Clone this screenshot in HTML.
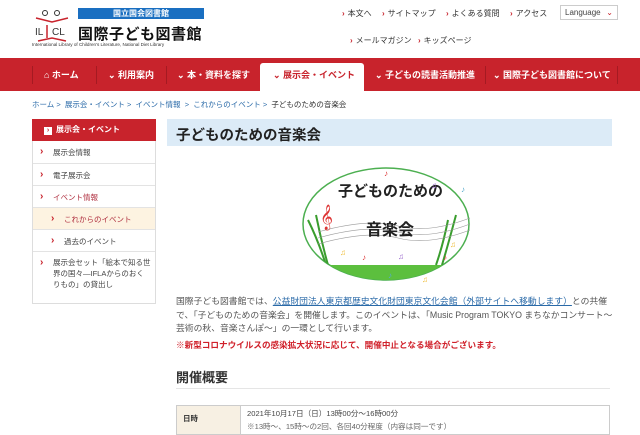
<!DOCTYPE html>
<html><head><meta charset="utf-8"><style>
*{margin:0;padding:0;box-sizing:border-box}
body{width:640px;height:426px;overflow:hidden;background:#fff;font-family:"Liberation Sans","Noto Sans CJK JP",sans-serif;color:#333;position:relative}
.a{position:absolute}
.t{font-size:8px;white-space:nowrap}
.chev{color:#c8232c;font-weight:bold;margin-right:3px}
.nav{left:0;top:58px;width:640px;height:33px;background:#c8232c}
.ni{top:68px;color:#fff;font-size:9px;font-weight:bold;white-space:nowrap}
.sep{top:66px;width:1px;height:18px;background:#a51a22}
.side{left:32px;width:124px;border:1px solid #ddd;border-top:none;font-size:7.5px;color:#444}
.si{position:absolute;left:0;width:122px;border-top:1px solid #e3e3e3;padding-left:20px}
.si:before{content:"›";position:absolute;left:7px;color:#c8232c;font-weight:bold;font-size:10px;line-height:10px;top:6px}
.si.sub:before{left:18px}
</style></head><body>
<svg class="a" style="left:32px;top:8px" width="40" height="36" viewBox="0 0 40 36">
<path d="M4 10 L20 14 L36 10" stroke="#c8232c" stroke-width="1.5" fill="none"/>
<path d="M6 33 L20 30 L34 33" stroke="#c8232c" stroke-width="1.5" fill="none"/>
<circle cx="13" cy="5" r="2.5" fill="none" stroke="#333"/><circle cx="25" cy="5" r="2.5" fill="none" stroke="#333"/>
<text x="3" y="27" font-size="10" fill="#333" font-family="Liberation Sans">IL</text>
<text x="20" y="27" font-size="10" fill="#333" font-family="Liberation Sans">CL</text>
<line x1="15" y1="17" x2="15" y2="30" stroke="#c8232c" stroke-width="1.5"/>
</svg>
<div class="a" style="left:78px;top:8px;width:126px;height:11px;background:#1a6fc1;color:#fff;font-size:8px;font-weight:bold;text-align:center;line-height:11px">国立国会図書館</div>
<div class="a" style="left:78px;top:23px;font-size:15px;font-weight:bold;color:#111;white-space:nowrap;letter-spacing:0.5px">国際子ども図書館</div>
<div class="a" style="left:32px;top:42px;font-size:4.6px;color:#333;white-space:nowrap">International Library of Children's Literature, National Diet Library</div>
<div class="a t" style="left:342px;top:8px"><span class="chev">›</span>本文へ</div>
<div class="a t" style="left:382px;top:8px"><span class="chev">›</span>サイトマップ</div>
<div class="a t" style="left:446px;top:8px"><span class="chev">›</span>よくある質問</div>
<div class="a t" style="left:510px;top:8px"><span class="chev">›</span>アクセス</div>
<div class="a" style="left:560px;top:5px;width:58px;height:15px;border:1px solid #ccc;font-size:8px;color:#444;padding:2px 4px">Language <span style="color:#c8232c;float:right">⌄</span></div>
<div class="a t" style="left:350px;top:35px"><span class="chev">›</span>メールマガジン</div>
<div class="a t" style="left:418px;top:35px"><span class="chev">›</span>キッズページ</div>
<div class="a nav"></div>
<div class="a" style="left:260px;top:63px;width:104px;height:28px;background:#fff;border-radius:3px 3px 0 0"></div>
<div class="a sep" style="left:32px"></div><div class="a sep" style="left:96px"></div><div class="a sep" style="left:166px"></div><div class="a sep" style="left:485px"></div><div class="a sep" style="left:617px"></div>
<div class="a ni" style="left:44px">⌂ ホーム</div>
<div class="a ni" style="left:108px">⌄ 利用案内</div>
<div class="a ni" style="left:177px">⌄ 本・資料を探す</div>
<div class="a ni" style="left:273px;color:#c8232c">⌄ 展示会・イベント</div>
<div class="a ni" style="left:375px">⌄ 子どもの読書活動推進</div>
<div class="a ni" style="left:493px">⌄ 国際子ども図書館について</div>
<div class="a" style="left:32px;top:99px;font-size:7.5px;color:#2a6aa8;white-space:nowrap">ホーム &gt;&nbsp; 展示会・イベント &gt;&nbsp; イベント情報 &nbsp;&gt;&nbsp; これからのイベント &gt;&nbsp; <span style="color:#333">子どものための音楽会</span></div>
<div class="a" style="left:32px;top:119px;width:124px;height:22px;background:#c8232c;color:#fff;font-size:8px;font-weight:bold;padding:5px 0 0 12px"><span style="display:inline-block;width:8px;height:8px;background:#fff;color:#c8232c;font-size:7px;line-height:8px;text-align:center;margin-right:4px">›</span>展示会・イベント</div>
<div class="a side" style="top:141px;height:163px">
<div class="si" style="top:0;height:22px;padding-top:6px;border-top:none">展示会情報</div>
<div class="si" style="top:22px;height:22px;padding-top:6px">電子展示会</div>
<div class="si" style="top:44px;height:22px;padding-top:6px;color:#b03040">イベント情報</div>
<div class="si sub" style="top:66px;height:22px;padding-top:6px;padding-left:31px;background:#fdf3e1;color:#b03040">これからのイベント</div>
<div class="si sub" style="top:88px;height:22px;padding-top:6px;padding-left:31px">過去のイベント</div>
<div class="si" style="top:110px;height:52px;padding-top:5px;line-height:11px;padding-right:4px">展示会セット「絵本で知る世界の国々―IFLAからのおくりもの」の貸出し</div>
</div>
<div class="a" style="left:167px;top:119px;width:445px;height:27px;background:#dcebf7;font-size:14.5px;font-weight:bold;color:#222;padding:5px 0 0 9px">子どものための音楽会</div>
<svg class="a" style="left:298px;top:160px" width="176" height="130" viewBox="0 0 176 130">
<defs><clipPath id="c"><ellipse cx="88" cy="64" rx="83" ry="56"/></clipPath></defs>
<ellipse cx="88" cy="64" rx="83" ry="56" fill="#fff" stroke="#4caf50" stroke-width="1.5"/>
<rect x="0" y="105" width="176" height="30" fill="#5cbf3e" clip-path="url(#c)"/>
<path d="M10 60 q10 20 18 45 M18 55 q5 25 12 50 M158 55 q-8 30 -14 50 M150 60 q-5 25 -12 45" stroke="#3a9d2e" stroke-width="2" fill="none" clip-path="url(#c)"/>
<path d="M20 72 Q70 58 100 66 T172 58 M20 78 Q70 64 100 72 T172 64 M20 84 Q70 70 100 78 T172 70" stroke="#999" stroke-width="0.6" fill="none"/>
<text x="22" y="64" font-size="22" fill="#d33">𝄞</text>
<text x="40" y="36" font-size="15" font-weight="bold" fill="#222" font-family="Noto Sans CJK JP">子どものための</text>
<text x="68" y="75" font-size="16" font-weight="bold" fill="#222" font-family="Noto Sans CJK JP">音楽会</text>
<text x="86" y="16" font-size="8" fill="#d33">♪</text><text x="133" y="28" font-size="8" fill="#96c">♫</text>
<text x="163" y="32" font-size="8" fill="#5ac">♪</text><text x="42" y="95" font-size="8" fill="#eb3">♫</text>
<text x="100" y="99" font-size="8" fill="#96c">♫</text><text x="145" y="100" font-size="8" fill="#d33">♪</text>
<text x="152" y="87" font-size="8" fill="#eb3">♫</text><text x="90" y="118" font-size="8" fill="#5ac">♪</text>
<text x="124" y="122" font-size="8" fill="#eb3">♫</text><text x="64" y="100" font-size="8" fill="#d33">♪</text>
</svg>
<div class="a" style="left:176px;top:295px;width:440px;font-size:8.8px;line-height:13.5px;color:#555">国際子ども図書館では、<span style="color:#2a6aa8;text-decoration:underline">公益財団法人東京都歴史文化財団東京文化会館（外部サイトへ移動します）</span>との共催で、「子どものための音楽会」を開催します。このイベントは、「Music Program TOKYO まちなかコンサート～芸術の秋、音楽さんぽ～」の一環として行います。</div>
<div class="a" style="left:176px;top:339px;font-size:8.6px;font-weight:bold;color:#d0202a;white-space:nowrap">※新型コロナウイルスの感染拡大状況に応じて、開催中止となる場合がございます。</div>
<div class="a" style="left:176px;top:367px;font-size:13px;font-weight:bold;color:#333">開催概要</div>
<div class="a" style="left:176px;top:388px;width:434px;height:1px;background:#e5e5e5"></div>
<div class="a" style="left:176px;top:405px;width:434px;height:30px;border:1px solid #ccc"></div>
<div class="a" style="left:177px;top:406px;width:64px;height:28px;background:#f7f0e3;border-right:1px solid #ccc;font-size:7.5px;font-weight:bold;padding:7px 0 0 6px">日時</div>
<div class="a" style="left:247px;top:408px;font-size:7.6px;color:#444;white-space:nowrap">2021年10月17日（日）13時00分～16時00分</div>
<div class="a" style="left:247px;top:421px;font-size:7.6px;color:#666;white-space:nowrap">※13時～、15時～の2回、各回40分程度（内容は同一です）</div>
</body></html>
